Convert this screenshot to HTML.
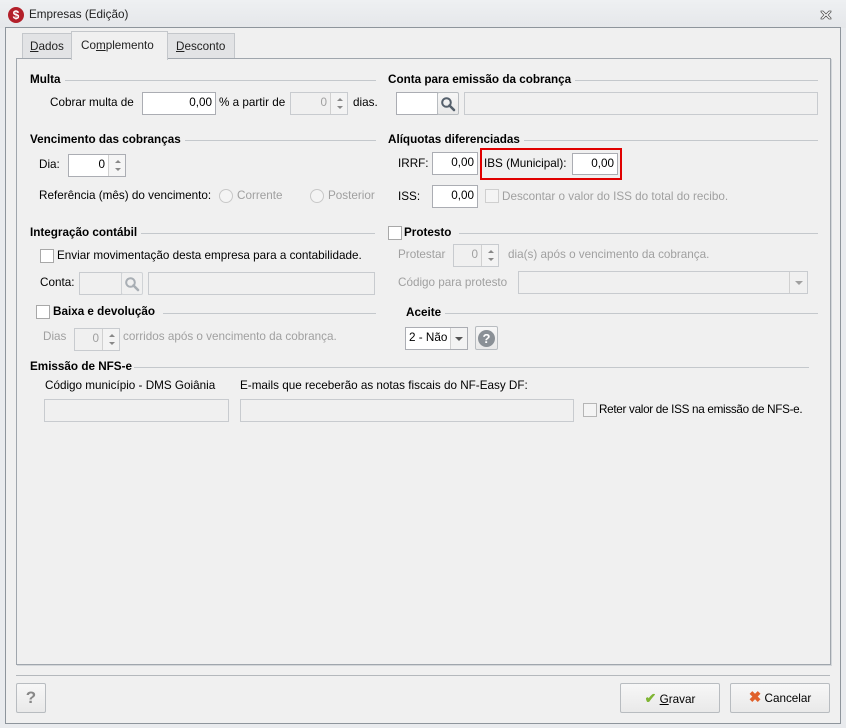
<!DOCTYPE html>
<html><head><meta charset="utf-8"><style>
*{margin:0;padding:0;box-sizing:border-box}
body{width:846px;height:728px;background:#e9ebee;font-family:"Liberation Sans",sans-serif;font-size:11.7px;color:#000;position:relative;overflow:hidden}
.a{position:absolute;white-space:nowrap}
.t{line-height:14px}
.b{font-weight:bold;background:#f0f0f0;padding-right:4px;z-index:2}
.g{color:#a0a0a0}
.hl{position:absolute;height:1px;background:#c4c8cc;z-index:1}
.in{position:absolute;background:#fff;border:1px solid #abadb3;text-align:right;padding-right:3px;line-height:20px}
.dis{position:absolute;background:#f0f0f0;border:1px solid #c8cbcf;text-align:right;padding-right:3px;line-height:20px;color:#a0a0a0}
.cb{position:absolute;width:14px;height:14px;border:1px solid #a8a8a8;background:#fff;z-index:2}
.cbd{position:absolute;width:14px;height:14px;border:1px solid #cfcfcf;background:#f4f4f4}
.sp{position:absolute;border-left:1px solid #d0d0d0;width:17px;top:0;bottom:0;right:0;background:#f3f3f3}
.sp:before{content:"";position:absolute;left:6px;top:5px;border:3px solid transparent;border-bottom:3px solid #888;border-top:0}
.sp:after{content:"";position:absolute;left:6px;bottom:5px;border:3px solid transparent;border-top:3px solid #888;border-bottom:0}
.rad{position:absolute;width:14px;height:14px;border-radius:50%;border:1px solid #c8c8c8;background:#f4f4f4}
.btn{position:absolute;border:1px solid #b8bcc0;border-radius:2px;background:linear-gradient(#f7f7f7,#e9e9e9);text-align:center}
</style></head><body>
<div class="a" style="left:0;top:0;width:846px;height:28px;background:linear-gradient(#eef0f2,#e5e7ea)"></div>
<div class="a" style="left:8px;top:7px;width:16px;height:16px;border-radius:50%;background:#b3202a;color:#fff;font-weight:bold;font-size:12px;text-align:center;line-height:16px">$</div>
<div class="a t" style="left:29px;top:8px;color:#222">Empresas (Edição)</div>
<svg class="a" style="left:820px;top:10px" width="12" height="10" viewBox="0 0 12 10"><path d="M1 1h2l3 3 3-3h2v1l-3 3 3 3v1H9L6 6 3 9H1V8l3-3-3-3z" fill="#fff" stroke="#555" stroke-width="0.8"/></svg>
<div class="a" style="left:5px;top:27px;width:836px;height:697px;background:#f0f0f0;border:1px solid #8e959c"></div>
<div class="a" style="left:22px;top:33px;width:50px;height:26px;background:#e2e3e5;border:1px solid #c4c7cb;border-bottom:0"></div>
<div class="a t" style="left:30px;top:40px;color:#222"><u>D</u>ados</div>
<div class="a" style="left:167px;top:33px;width:68px;height:26px;background:#e2e3e5;border:1px solid #c4c7cb;border-bottom:0"></div>
<div class="a t" style="left:176px;top:40px;color:#222"><u>D</u>esconto</div>
<div class="a" style="left:16px;top:58px;width:815px;height:607px;border:1px solid #a0a6ad;background:#f0f0f0;box-shadow:1px 1px 0 #d4d7da"></div>
<div class="a" style="left:71px;top:31px;width:97px;height:29px;background:#f0f0f0;border:1px solid #c4c7cb;border-bottom:0"></div>
<div class="a t" style="left:81px;top:39px;color:#222">Co<u>m</u>plemento</div>

<div class="a t b" style="left:30px;top:73px">Multa</div><div class="hl" style="left:40px;top:80px;width:336px"></div>
<div class="a t" style="left:50px;top:96px">Cobrar multa de</div>
<div class="in" style="left:142px;top:92px;width:74px;height:23px">0,00</div>
<div class="a t" style="left:219px;top:96px">% a partir de</div>
<div class="dis" style="left:290px;top:92px;width:58px;height:23px;padding-right:20px">0<div class="sp"></div></div>
<div class="a t" style="left:353px;top:96px">dias.</div>
<div class="a t b" style="left:388px;top:73px">Conta para emissão da cobrança</div><div class="hl" style="left:400px;top:80px;width:418px"></div>
<div class="in" style="left:396px;top:92px;width:42px;height:23px"></div>
<div class="btn" style="left:437px;top:92px;width:22px;height:23px"><svg width="16" height="16" viewBox="0 0 16 16" style="margin-top:3px"><circle cx="6.5" cy="6.5" r="4.3" fill="none" stroke="#55606c" stroke-width="2"/><path d="M9.5 9.5l4.5 4.5" stroke="#55606c" stroke-width="2.6" stroke-linecap="round"/></svg></div>
<div class="dis" style="left:464px;top:92px;width:354px;height:23px"></div>

<div class="a t b" style="left:30px;top:133px">Vencimento das cobranças</div><div class="hl" style="left:40px;top:140px;width:336px"></div>
<div class="a t" style="left:39px;top:158px">Dia:</div>
<div class="in" style="left:68px;top:154px;width:58px;height:23px;padding-right:20px">0<div class="sp" style="background:#f5f5f5"></div></div>
<div class="a t" style="left:39px;top:189px">Referência (mês) do vencimento:</div>
<div class="rad" style="left:219px;top:189px"></div><div class="a t g" style="left:237px;top:189px">Corrente</div>
<div class="rad" style="left:310px;top:189px"></div><div class="a t g" style="left:328px;top:189px">Posterior</div>

<div class="a t b" style="left:388px;top:133px">Alíquotas diferenciadas</div><div class="hl" style="left:400px;top:140px;width:418px"></div>
<div class="a t" style="left:398px;top:157px">IRRF:</div>
<div class="in" style="left:432px;top:152px;width:46px;height:23px">0,00</div>
<div class="a" style="left:480px;top:148px;width:142px;height:32px;border:2px solid #e00000"></div>
<div class="a t" style="left:484px;top:157px">IBS (Municipal):</div>
<div class="in" style="left:572px;top:153px;width:46px;height:22px;line-height:19px">0,00</div>
<div class="a t" style="left:398px;top:190px">ISS:</div>
<div class="in" style="left:432px;top:185px;width:46px;height:23px">0,00</div>
<div class="cbd" style="left:485px;top:189px"></div>
<div class="a t g" style="left:502px;top:190px">Descontar o valor do ISS do total do recibo.</div>

<div class="a t b" style="left:30px;top:226px">Integração contábil</div><div class="hl" style="left:40px;top:233px;width:335px"></div>
<div class="cb" style="left:40px;top:249px"></div>
<div class="a t" style="left:57px;top:249px">Enviar movimentação desta empresa para a contabilidade.</div>
<div class="a t" style="left:40px;top:276px">Conta:</div>
<div class="dis" style="left:79px;top:272px;width:43px;height:23px"></div>
<div class="btn" style="left:121px;top:272px;width:22px;height:23px;border-color:#d0d3d6;background:#f0f0f0"><svg width="16" height="16" viewBox="0 0 16 16" style="margin-top:3px"><circle cx="6.5" cy="6.5" r="4.3" fill="none" stroke="#a8aeb4" stroke-width="2"/><path d="M9.5 9.5l4.5 4.5" stroke="#a8aeb4" stroke-width="2.6" stroke-linecap="round"/></svg></div>
<div class="dis" style="left:148px;top:272px;width:227px;height:23px"></div>

<div class="cb" style="left:36px;top:305px"></div>
<div class="a t b" style="left:53px;top:305px;padding-right:8px">Baixa e devolução</div><div class="hl" style="left:60px;top:313px;width:316px"></div>
<div class="a t g" style="left:43px;top:330px">Dias</div>
<div class="dis" style="left:74px;top:328px;width:46px;height:23px;padding-right:20px">0<div class="sp"></div></div>
<div class="a t g" style="left:123px;top:330px">corridos após o vencimento da cobrança.</div>

<div class="cb" style="left:388px;top:226px"></div>
<div class="a t b" style="left:404px;top:226px;padding-right:8px">Protesto</div><div class="hl" style="left:410px;top:233px;width:408px"></div>
<div class="a t g" style="left:398px;top:248px">Protestar</div>
<div class="dis" style="left:453px;top:244px;width:46px;height:23px;padding-right:20px">0<div class="sp"></div></div>
<div class="a t g" style="left:508px;top:248px">dia(s) após o vencimento da cobrança.</div>
<div class="a t g" style="left:398px;top:276px">Código para protesto</div>
<div class="dis" style="left:518px;top:271px;width:290px;height:23px"><div class="a" style="right:0;top:0;bottom:0;width:18px;border-left:1px solid #d0d0d0"><div class="a" style="left:5px;top:9px;border:4px solid transparent;border-top:4px solid #a0a0a0;border-bottom:0"></div></div></div>

<div class="a t b" style="left:406px;top:306px">Aceite</div><div class="hl" style="left:410px;top:313px;width:408px"></div>
<div class="in" style="left:405px;top:327px;width:63px;height:23px;text-align:left;padding-left:3px">2 - Não<div class="a" style="right:0;top:0;bottom:0;width:17px;border-left:1px solid #d0d0d0;background:#f3f3f3"><div class="a" style="left:4px;top:9px;border:4px solid transparent;border-top:4px solid #555;border-bottom:0"></div></div></div>
<div class="btn" style="left:475px;top:326px;width:23px;height:24px"><div style="width:17px;height:17px;border-radius:50%;background:#8a9096;color:#fff;font-weight:bold;font-size:13px;line-height:17px;margin:3px auto 0">?</div></div>

<div class="a t b" style="left:30px;top:360px;padding-right:2px">Emissão de NFS-e</div><div class="hl" style="left:40px;top:367px;width:769px"></div>
<div class="a t" style="left:45px;top:379px">Código município - DMS Goiânia</div>
<div class="dis" style="left:44px;top:399px;width:185px;height:23px"></div>
<div class="a t" style="left:240px;top:379px">E-mails que receberão as notas fiscais do NF-Easy DF:</div>
<div class="dis" style="left:240px;top:399px;width:334px;height:23px"></div>
<div class="cbd" style="left:583px;top:403px;border-color:#b5b5b5"></div>
<div class="a t" style="left:599px;top:403px;letter-spacing:-0.3px">Reter valor de ISS na emissão de NFS-e.</div>

<div class="a" style="left:16px;top:675px;width:814px;height:1px;background:#b4b8bc"></div>
<div class="btn" style="left:16px;top:683px;width:30px;height:30px;line-height:28px;font-size:17px;color:#888;font-weight:bold">?</div>
<div class="btn" style="left:620px;top:683px;width:100px;height:30px;line-height:28px"><span style="color:#7fb534;font-size:14px;font-weight:bold">✔</span> <u>G</u>ravar</div>
<div class="btn" style="left:730px;top:683px;width:100px;height:30px;line-height:28px"><span style="color:#e0602a;font-size:15px;font-weight:bold">✖</span> Cancelar</div>
</body></html>
